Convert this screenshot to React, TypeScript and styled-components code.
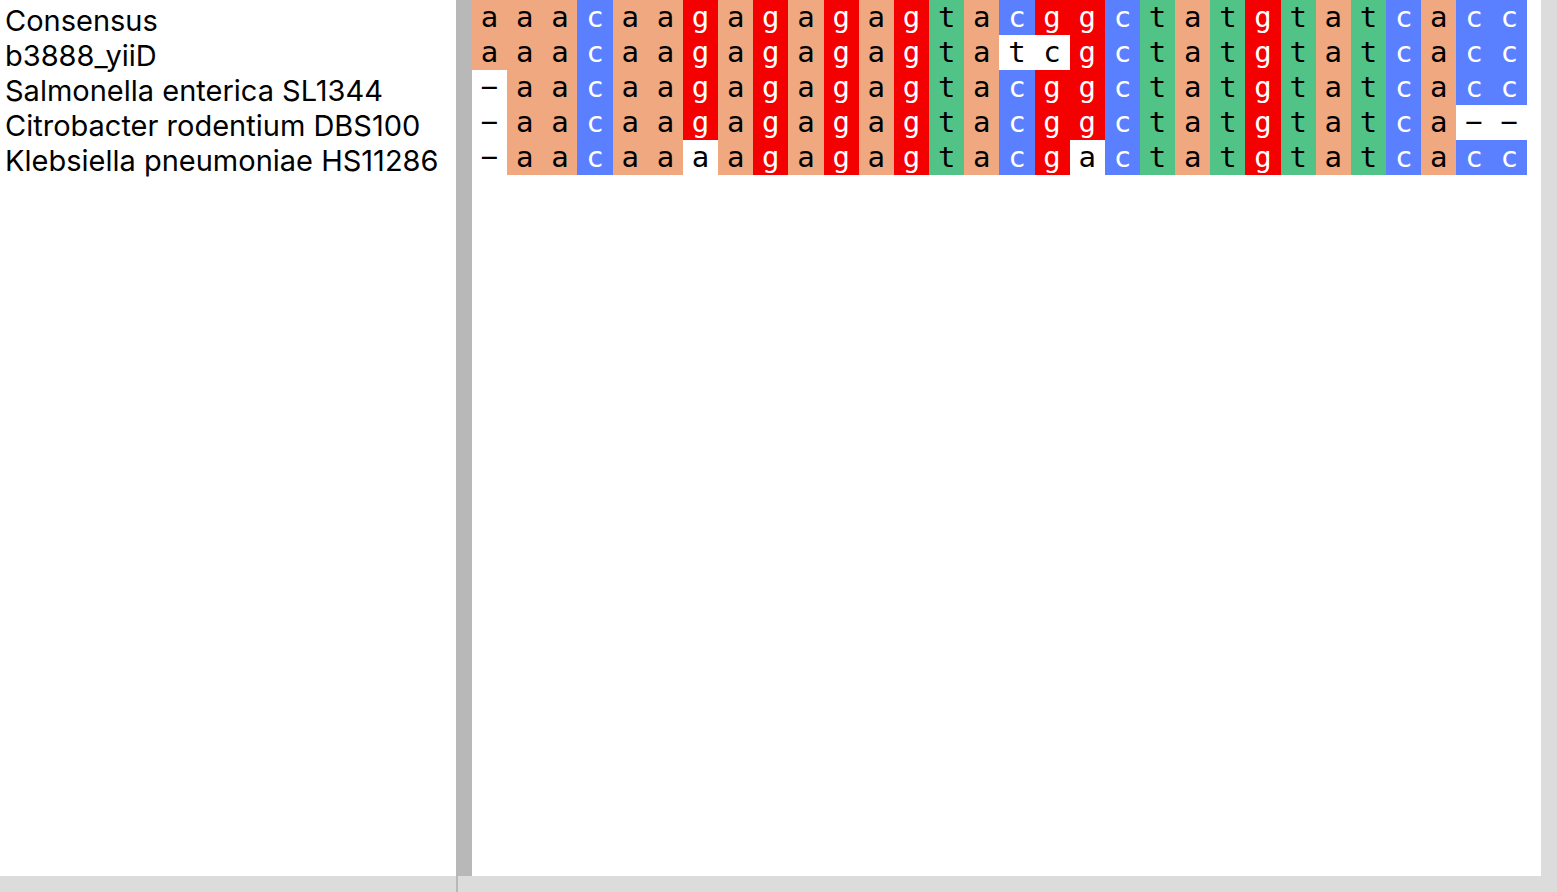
import styled, { createGlobalStyle } from "styled-components";

const GlobalStyle = createGlobalStyle`
  html, body {
    margin: 0;
    padding: 0;
    background: #ffffff;
    overflow: hidden;
  }
`

const CONSENSUS = "aaacaagagagagtacggctatgtatcacc"

const SEQUENCES = [
  { name: "Consensus", seq: CONSENSUS, isConsensus: true },
  { name: "b3888_yiiD", seq: "aaacaagagagagtatcgctatgtatcacc" },
  { name: "Salmonella enterica SL1344", seq: "-aacaagagagagtacggctatgtatcacc" },
  { name: "Citrobacter rodentium DBS100", seq: "-aacaagagagagtacggctatgtatca--" },
  { name: "Klebsiella pneumoniae HS11286", seq: "-aacaaaagagagtacgactatgtatcacc" },
]

const BASE_COLORS: Record<string, { bg: string; fg: string }> = {
  a: { bg: "#efa880", fg: "#000000" },
  c: { bg: "#5a80ff", fg: "#ffffff" },
  g: { bg: "#f40000", fg: "#ffffff" },
  t: { bg: "#52c386", fg: "#000000" },
}

const cellStyle = (base: string, consensus: string, isConsensus?: boolean) => {
  if (base === "-" || (!isConsensus && base !== consensus)) {
    return { bg: "#ffffff", fg: "#000000" }
  }
  return BASE_COLORS[base] ?? { bg: "#ffffff", fg: "#000000" }
}

export default function App() {
  return (
    <>
      <GlobalStyle />
      <Window>
        <MainRow>
          <NamesPane>
            {SEQUENCES.map((s) => (
              <NameRow key={s.name}>{s.name}</NameRow>
            ))}
          </NamesPane>
          <Divider />
          <AlignmentPane>
            <Grid>
              {SEQUENCES.map((s) =>
                s.seq.split("").map((base, i) => {
                  const { bg, fg } = cellStyle(base, CONSENSUS[i], s.isConsensus)
                  return (
                    <Cell key={s.name + i} $bg={bg} $fg={fg}>
                      {base === "-" ? "−" : base}
                    </Cell>
                  )
                })
              )}
            </Grid>
          </AlignmentPane>
          <VScroll />
        </MainRow>
        <BottomRow>
          <HScrollLeft />
          <HScrollSplit />
          <HScrollRight />
        </BottomRow>
      </Window>
    </>
  );
};


const Window = styled.div`
  display: flex;
  flex-direction: column;
  width: 1557px;
  height: 892px;
`
const MainRow = styled.div`
  display: flex;
  height: 876px;
`
const NamesPane = styled.div`
  width: 456px;
  display: flex;
  flex-direction: column;
  background: #ffffff;
`
const NameRow = styled.div`
  height: 35px;
  line-height: 35px;
  padding: 3px 0 0 5px;
  box-sizing: border-box;
  font-family: Inter, "Liberation Sans", sans-serif;
  font-size: 29px;
  color: #000000;
  white-space: nowrap;
`
const Divider = styled.div`
  width: 16px;
  background: #b8b8b8;
`
const AlignmentPane = styled.div`
  flex: 1;
  background: #ffffff;
`
const Grid = styled.div`
  display: grid;
  grid-template-columns: repeat(30, 35.166px);
  grid-auto-rows: 35px;
`
const Cell = styled.div<{ $bg: string; $fg: string }>`
  background: ${(p) => p.$bg};
  color: ${(p) => p.$fg};
  display: flex;
  align-items: center;
  justify-content: center;
  font-family: "DejaVu Sans Mono", monospace;
  font-size: 29px;
  line-height: 35px;
  padding-bottom: 1px;
`
const VScroll = styled.div`
  width: 16px;
  background: #dcdcdc;
`
const BottomRow = styled.div`
  display: flex;
  height: 16px;
`
const HScrollLeft = styled.div`
  width: 456px;
  background: #dcdcdc;
`
const HScrollSplit = styled.div`
  width: 2px;
  background: #b8b8b8;
`
const HScrollRight = styled.div`
  flex: 1;
  background: #dcdcdc;
`
